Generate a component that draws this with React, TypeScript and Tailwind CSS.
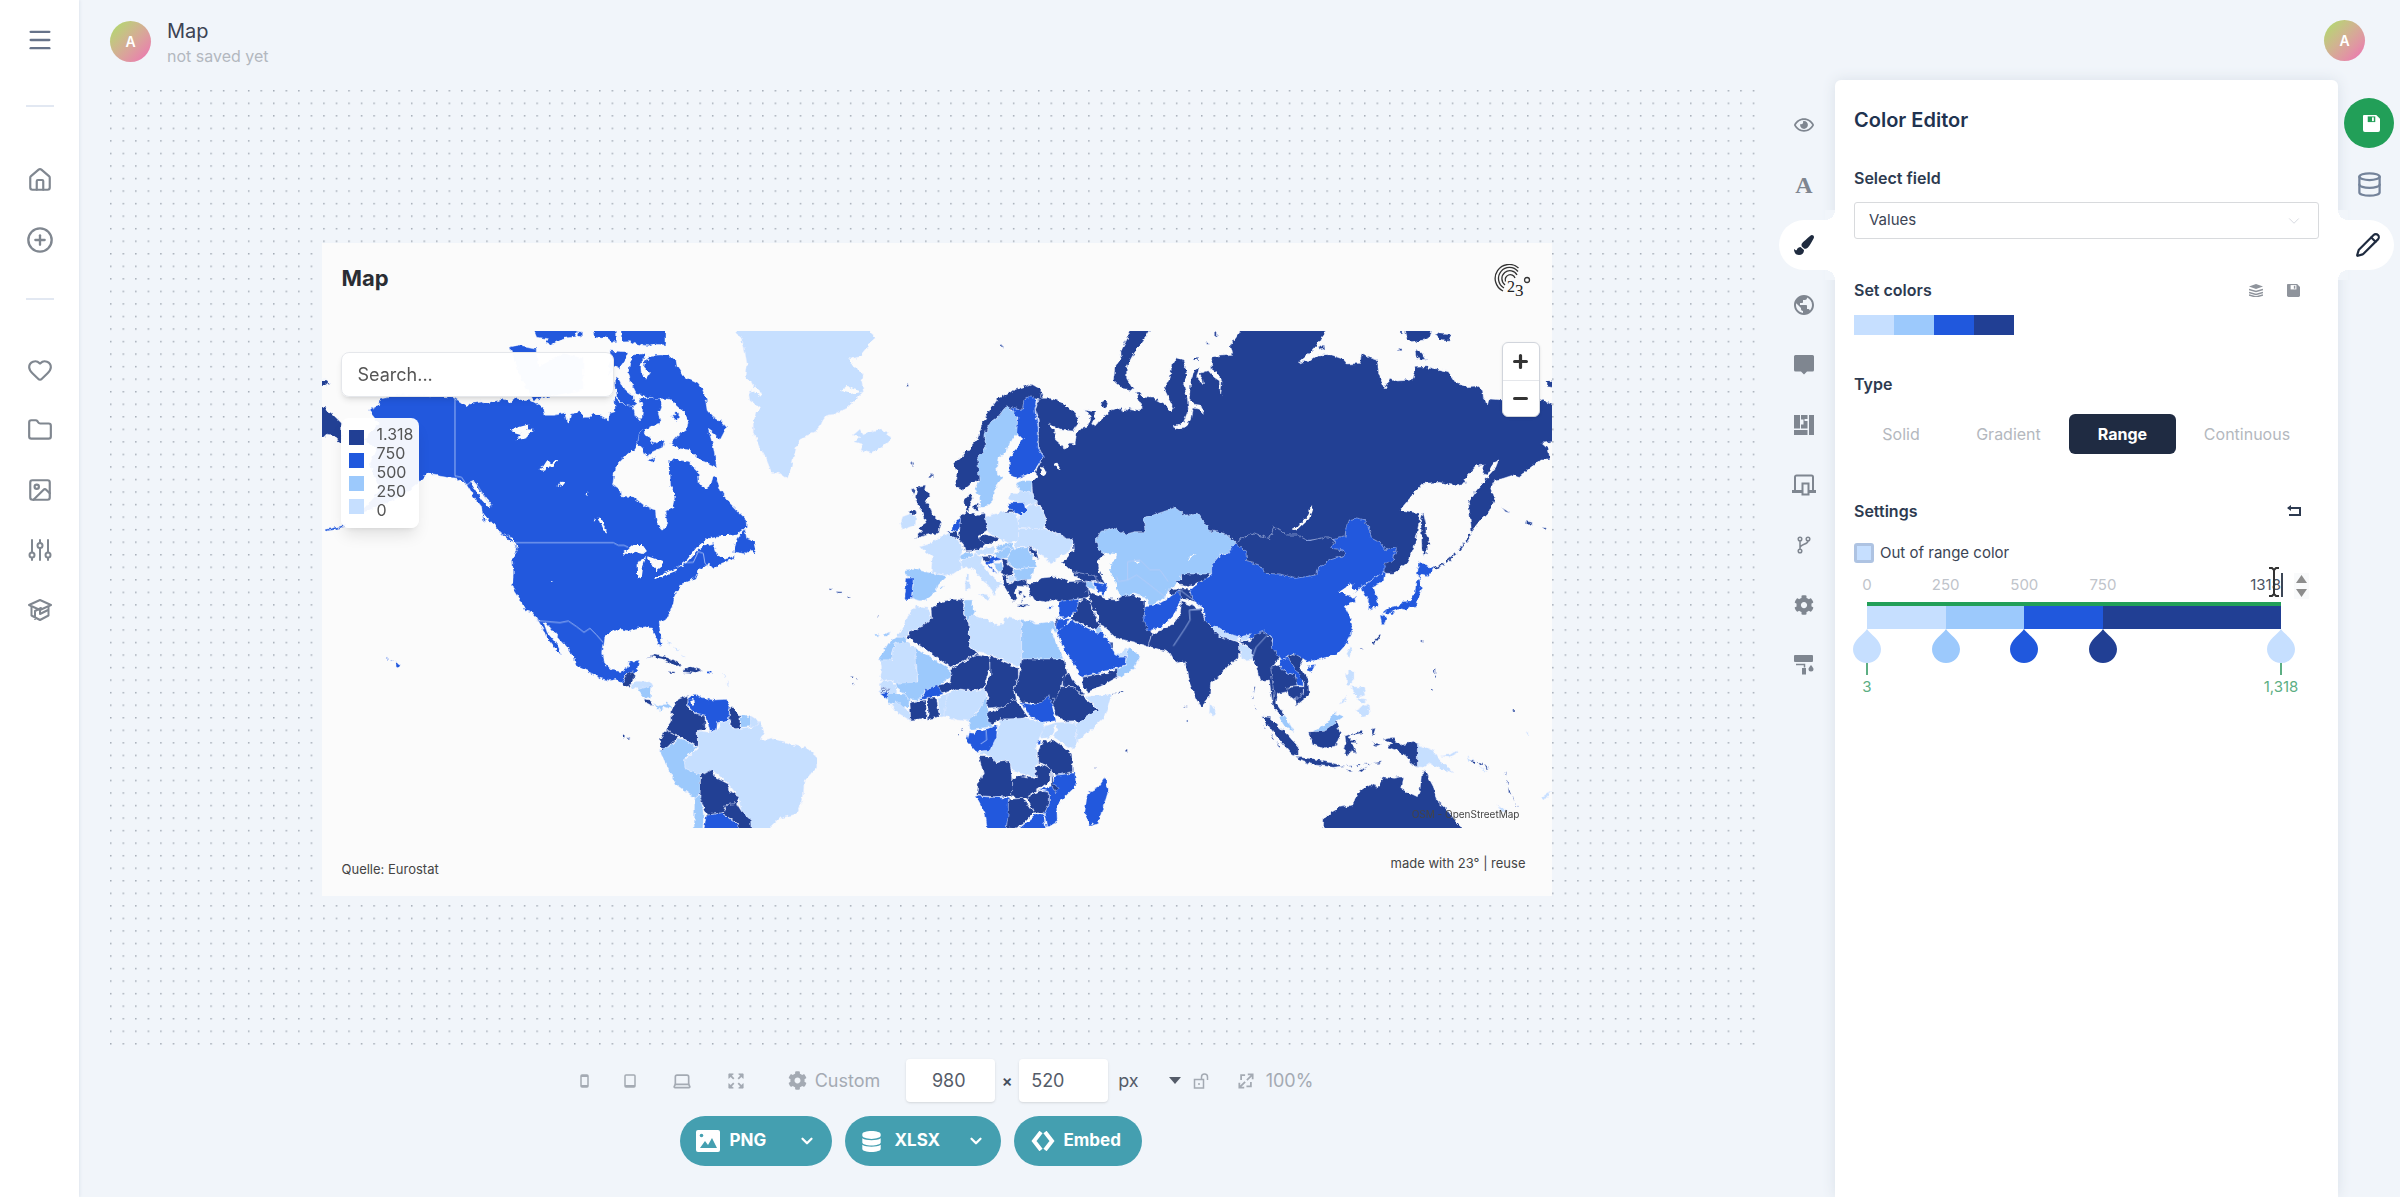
import { ReactNode } from 'react';
import { ChevronDown, Database, Folder, Heart, House, Image, Laptop, Menu, Pencil, CirclePlus } from 'lucide-react';
import { FaCog, FaDatabase, FaPaintBrush, FaRegEye } from 'react-icons/fa';
import { MdPublic } from 'react-icons/md';

const NAVY = '#213f94';
const BLUE = '#2058dd';
const SKY = '#9cc9fc';
const PALE = '#c6dfff';
const SEA = '#fbfbfb';

interface Shape {
  fill: string;
  d: string;
}

interface Region {
  x: number;
  y: number;
  shapes: Shape[];
  lines?: string[];
}

// every region is drawn on its own grid, three units to the pixel
const regions: Region[] = [
  {
    // North America
    x: 300,
    y: 230,
    shapes: [
      { fill: BLUE, d: 'M205 540L235 525 240 505 300 492 370 496 440 500 465 505 482 516 500 530 512 518 545 513 562 518 590 512 612 508 628 518 645 503 672 512 690 510 715 524 732 538 735 556 760 556 795 548 800 570 806 582 812 552 840 545 852 562 868 562 880 552 905 558 925 570 930 550 945 545 944 500 962 515 980 525 1000 530 1005 555 1015 572 1026 560 1028 530 1018 505 1040 503 1078 500 1085 525 1075 550 1082 580 1062 585 1030 600 1012 632 1008 655 985 670 960 695 945 712 938 765 960 780 962 797 1000 800 1040 832 1066 840 1070 880 1090 902 1103 880 1095 845 1118 835 1125 790 1112 770 1108 690 1130 688 1165 695 1195 725 1197 755 1215 778 1232 765 1240 738 1250 748 1262 780 1278 808 1310 840 1338 868 1340 892 1310 912 1265 920 1230 925 1200 945 1215 945 1240 940 1250 965 1275 988 1310 975 1295 990 1265 1000 1240 1016 1225 1000 1195 1022 1185 1045 1145 1062 1125 1095 1120 1120 1105 1160 1078 1175 1078 1180 1082 1215 1087 1245 1080 1250 1068 1225 1055 1195 1035 1190 1010 1195 985 1202 965 1198 940 1200 915 1220 908 1270 915 1300 935 1320 965 1325 980 1315 985 1297 1018 1290 1010 1325 1002 1328 978 1332 968 1362 950 1348 930 1352 900 1345 885 1335 850 1318 828 1308 822 1285 800 1250 780 1228 760 1205 738 1178 732 1180 742 1208 760 1230 775 1250 785 1272 775 1268 757 1245 738 1222 728 1195 710 1164 696 1147 675 1140 655 1099 637 1071 640 1030 637 985 652 962 640 935 600 910 585 885 550 872 545 830 520 798 500 765 470 745 440 742 400 735 385 728 358 757 320 790 270 815 180 852 240 780 222 740 210 700 228 655 195 632 210 605 235 578Z' },
      { fill: BLUE, d: 'M695 285L1000 285 830 305 825 320 792 325 755 346 735 340 745 326 710 322Z M835 308h10v14h-10Z M878 290H950V335H935L920 322 905 325 882 322Z M962 290H1095V345L1060 342 1045 347 1018 344 990 335 965 336Z' },
      { fill: BLUE, d: 'M630 352L660 345 708 355 715 410 790 370 850 385 850 480 700 510 660 440Z' },
      { fill: BLUE, d: 'M930 362L985 366 975 390 958 415 945 408 925 440Z M945 440L958 450 970 475 990 490 1012 520 1000 530 975 525 950 500Z' },
      { fill: BLUE, d: 'M1000 375L1038 370 1035 385 1022 400 1024 430 1038 448 1050 430 1032 410 1035 392 1055 376 1082 375 1110 377 1128 392 1132 412 1150 440 1192 460 1208 480 1220 512 1225 545 1240 562 1262 572 1280 592 1260 630 1242 610 1225 598 1240 650 1250 712 1225 700 1200 690 1170 660 1130 655 1112 640 1135 615 1160 600 1165 570 1150 545 1130 528 1110 508 1060 505 1010 492 992 455 985 425 990 395Z' },
      { fill: BLUE, d: 'M1015 608L1030 600 1045 620 1062 640 1095 630 1088 652 1058 665 1040 680 1030 660 1010 640Z M1045 690L1070 682 1058 697Z M1115 560L1130 545 1140 558 1130 575Z' },
      { fill: BLUE, d: 'M1335 898L1340 925 1362 935 1368 972 1350 962 1340 972 1300 965 1308 940 1322 912Z' },
      { fill: SEA, d: 'M968 970L985 958 1000 945 1030 945 1042 962 1030 972 1005 965 985 972Z M1012 1048L1010 1005 1025 985 1038 982 1030 1005 1025 1045Z M1040 978L1060 985 1088 995 1085 1010 1070 1022 1055 1002Z M1060 1046L1090 1030 1128 1016 1130 1022 1095 1036 1066 1050Z M1128 1016L1160 990 1190 952 1225 924 1235 928 1200 955 1165 995Z M1260 915L1300 915 1305 935 1285 960 1278 985 1255 978 1248 960 1262 940Z' },
      { fill: SEA, d: 'M628 602L655 592 688 583 682 598 704 600 685 612 682 625 650 630 662 612Z M712 720L728 712 742 690 750 700 774 690 760 708 742 712 735 722Z M772 768L785 755 802 757 790 764Z M856 795L865 786 862 802Z M893 862L905 865 912 885 922 908 908 900Z M880 865l6 6 -4 4Z M752 1052l8 4 -4 4Z' },
      { fill: SEA, d: 'M510 755L522 750 540 780 575 825 568 835 545 810Z M550 850L575 880 600 905 640 925 655 955 640 940 600 915 560 885Z' },
      { fill: BLUE, d: 'M75 898L95 895 135 885 135 890 100 900 76 904Z M600 905L625 918 642 938 625 930Z' },
      { fill: NAVY, d: 'M40 510L64 528 95 550 125 580 125 640 108 628 98 615 80 612 64 628 40 625Z M40 450H80L88 458 76 468H40Z' },
    ],
    lines: ['M465 505V738L485 742 500 765 518 752 535 770 560 810 575 830', 'M645 938H940L955 946 972 946 985 952', 'M1150 998L1180 997 1195 965 1210 970 1215 1000 1225 1010', 'M710 1172L780 1178 805 1173 830 1190 852 1207 870 1195 890 1215 910 1238'],
  },
  {
    // Greenland and Iceland
    x: 700,
    y: 300,
    shapes: [
      { fill: PALE, d: 'M100 75L515 75 512 98 528 112 508 128 498 148 480 170 455 175 470 200 490 225 485 245 490 275 470 295 440 325 405 342 380 345 368 362 355 390 325 405 300 415 290 440 282 465 272 510 262 535 240 520 215 517 198 475 178 440 160 400 160 370 168 340 182 325 150 302 145 275 168 270 155 245 138 235 142 195 130 130Z' },
      { fill: SEA, d: 'M420 272L440 258 462 268 488 275 455 282Z M445 175L470 180 490 215 465 205Z M150 255L178 270 185 290 160 275Z' },
      { fill: PALE, d: 'M460 405L480 388 488 405 515 395 545 385 560 398 572 417 545 442 515 460 480 450 488 432 465 425 480 412Z' },
      { fill: NAVY, d: 'M615 260L628 248 625 258Z M902 134h5v8h-5Z M632 484l10 4 -3 12Z M690 530l8 -12 0 12Z M388 866h6v4h-6Z M412 874l14 4 -12 2Z M446 888h5v5h-5Z M534 949h5v3h-5Z' },
      { fill: SKY, d: 'M524 1003L540 1001 530 1008Z M552 1006L572 995 560 1010Z' },
    ],
  },
  {
    // Russia
    x: 860,
    y: 320,
    shapes: [
      { fill: NAVY, d: 'M545 215L548 235 575 235 620 257 650 285 655 310 640 333 600 330 565 308 575 325 590 340 585 358 602 372 612 388 632 372 642 375 646 345 665 325 683 322 692 295 675 268 705 272 704 292 695 312 705 318 722 298 750 275 782 262 790 278 805 265 832 270 850 268 838 240 828 212 850 232 885 235 915 252 932 275 940 262 925 232 912 205 930 175 935 135 950 113 970 120 982 165 970 190 982 235 985 270 970 308 942 320 955 328 975 325 992 295 998 264 1018 268 1030 280 1024 256 1000 252 988 235 992 185 1004 150 1018 140 1010 172 1030 195 1028 175 1018 160 1045 152 1062 172 1078 182 1082 225 1086 185 1072 160 1055 148 1055 112 1085 105 1118 103 1112 75 1130 50 1150 15 1400 15 1392 45 1372 72 1345 102 1315 130 1350 120 1372 105 1410 104 1450 118 1462 132 1500 130 1505 98 1525 112 1552 120 1556 160 1572 205 1590 175 1610 183 1658 180 1668 142 1700 140 1765 155 1788 190 1820 200 1850 198 1868 212 1870 235 1885 258 1890 237 1925 240 2040 238 2095 262 2095 362 2045 370 2065 388 2070 420 2040 420 1975 472 1960 465 1930 475 1905 480 1892 505 1904 540 1888 575 1868 595 1835 637 1830 590 1825 545 1842 520 1872 485 1905 448 1915 422 1902 428 1880 462 1868 458 1874 435 1850 437 1815 475 1820 490 1780 495 1740 487 1690 490 1660 522 1620 570 1650 575 1680 580 1672 640 1660 690 1640 730 1600 760 1575 760 1530 700 1500 640 1465 640 1455 680 1425 700 1300 700 1120 700 1050 660 1015 630 940 610 900 640 855 670 800 670 730 665 722 690 735 702 712 722 720 760 735 792 700 780 640 760 605 725 620 715 640 690 638 660 600 645 555 625 560 600 545 565 520 545 515 490 535 470 525 460 548 415 535 380 535 300 525 270Z' },
      { fill: NAVY, d: 'M818 15L880 15 862 45 835 80 815 112 800 142 800 175 820 210 785 205 760 182 765 142 785 112 782 95 800 60Z M722 250l14 -10 8 12 -14 12Z M1066 36h6v12h-6Z M1040 68h8v5h-8Z M1000 112h14v8h-14Z M420 74h5v6h-5Z' },
      { fill: NAVY, d: 'M1690 575L1698 610 1698 640 1712 672 1700 678 1700 700 1692 712 1686 690 1684 640 1682 600Z M1630 20H1718L1710 52 1690 60 1655 68 1638 50Z M1725 40L1775 45 1770 64 1745 62Z M1665 88L1685 98 1700 120 1680 122 1668 108Z M2060 185L2095 175V205L2062 200Z M1375 80l15 -5 2 12 -14 4Z M1620 36h8v6h-8Z M1618 86h8v6h-8Z' },
      { fill: NAVY, d: 'M1830 640L1815 665 1820 668 1836 642Z M1812 670L1795 690 1799 694 1815 674Z M1788 697L1758 722 1762 726 1792 700Z M1750 728L1722 745 1726 750 1754 731Z M1928 565l10 6 12 8 -14 -4Z M1996 604l22 3 -12 8Z M2046 622l14 2 -4 6Z' },
      { fill: SEA, d: 'M540 440L552 445 560 460 545 468Z M583 430L592 428 602 445 592 450Z M1297 628L1320 613 1345 588 1352 556 1358 562 1348 596 1322 622 1305 630Z' },
      // central and east Asia
      { fill: SKY, d: 'M708 660L722 635 760 625 800 642 825 635 855 635 850 592 880 585 910 575 945 563 975 585 1015 583 1050 632 1095 640 1125 668 1108 700 1080 703 1058 735 1055 765 965 765 958 785 925 810 918 830 890 848 870 860 855 830 820 822 780 835 765 815 755 780 745 735 770 705 735 700 715 690Z' },
      { fill: SEA, d: 'M720 715L742 700 770 702 768 718 748 735 752 760 765 780 770 802 780 830 760 840 735 828 730 805 742 790 720 762 712 740Z M983 722L990 708 1010 702 992 714Z M825 722l15 0 -8 10Z' },
      { fill: NAVY, d: 'M965 762L1050 762 1040 778 1010 790 985 800 960 795 945 782 965 778Z M925 810L945 805 985 808 1002 835 1020 850 965 835 935 832Z' },
      { fill: BLUE, d: 'M1125 668L1425 658 1455 650 1458 625 1465 600 1490 594 1508 598 1525 620 1535 655 1560 668 1575 690 1610 680 1600 720 1575 730 1575 758 1545 772 1505 800 1490 815 1470 828 1478 835 1490 832 1480 845 1455 860 1468 885 1476 910 1475 940 1452 980 1430 1005 1390 1015 1345 1025 1320 1012 1300 1003 1260 1020 1235 985 1238 955 1210 935 1175 955 1135 950 1110 955 1055 920 1035 905 1030 865 995 835 990 810 1005 798 1055 765 1055 735 1080 705 1105 700Z' },
      { fill: SEA, d: 'M1438 815L1458 802 1465 792 1480 790 1478 808 1492 812 1475 828 1450 822Z' },
      { fill: NAVY, d: 'M1128 665L1175 640 1230 655 1242 620 1280 645 1312 645 1345 663 1400 650 1425 660 1415 685 1450 690 1456 705 1410 720 1375 745 1370 765 1305 775 1260 762 1215 760 1200 735 1160 725 1158 695 1130 670Z' },
      { fill: BLUE, d: 'M1505 802L1540 775 1575 757 1570 785 1540 800 1550 828 1556 858 1525 870 1528 842 1512 825Z' },
      { fill: BLUE, d: 'M1680 722L1692 735 1722 745 1702 770 1685 765 1678 772 1668 760Z M1678 772L1685 808 1675 832 1670 858 1650 860 1635 872 1615 868 1588 880 1565 882 1590 862 1622 855 1630 845 1650 842 1665 815 1668 785Z M1560 885L1580 890 1575 908 1565 912Z M1590 875L1605 876 1595 888Z' },
    ],
    lines: ['M803 780V725L840 720 870 750 900 750 925 785', 'M770 770L775 785 803 780 830 765 870 795 895 815 918 832', 'M535 235L525 265 535 300 535 380 550 410'],
  },
  {
    // Europe
    x: 860,
    y: 320,
    shapes: [
      { fill: NAVY, d: 'M280 430L310 405 350 362 365 315 388 272 415 235 450 215 480 203 510 193 545 212 540 240 520 235 500 245 490 268 455 268 440 262 412 295 390 312 380 365 370 410 358 420 358 480 335 490 312 510 290 500 286 480 292 455Z' },
      { fill: SKY, d: 'M440 257L455 270 472 275 475 340 462 350 450 368 440 395 415 412 410 440 412 462 428 470 412 495 400 518 402 540 382 560 362 562 358 530 345 505 357 480 353 412 375 390 375 345 385 312 410 295Z' },
      { fill: BLUE, d: 'M452 262L470 268 490 267 496 237 514 228 528 240 525 275 535 320 535 380 550 412 520 460 475 474 448 466 448 412 472 385 487 355 470 340 474 290Z' },
      { fill: NAVY, d: 'M314 540L332 518 337 535 328 555 330 572 316 570Z M340 555L356 552 352 574 340 570Z' },
      { fill: NAVY, d: 'M172 502L197 498 194 512 212 520 196 540 210 560 218 585 245 608 236 640 205 644 165 655 188 634 176 622 198 608 190 578 176 562 165 535Z M148 572L168 568 170 580 155 584Z M155 510l10 -6 -6 20Z M208 470l8 -12 0 12Z' },
      { fill: PALE, d: 'M128 590L150 582 168 586 166 615 128 628 122 612Z' },
      { fill: NAVY, d: 'M300 592L320 575 345 585 375 580 382 630 352 650 376 672 358 690 315 692 310 672 296 658 300 620Z' },
      { fill: BLUE, d: 'M276 620L288 602 302 598 300 620 292 636 275 630Z' },
      { fill: NAVY, d: 'M258 636L290 634 298 656 280 652Z' },
      { fill: PALE, d: 'M376 590L430 575 470 580 476 620 475 662 448 670 418 655 384 636Z' },
      { fill: NAVY, d: 'M352 655L376 643 418 655 398 672 372 670Z' },
      { fill: SKY, d: 'M468 490L485 482 516 482 515 520 480 512Z' },
      { fill: PALE, d: 'M448 538L452 520 475 522 480 512 518 520 530 550 498 558 470 545Z' },
      { fill: BLUE, d: 'M446 548L495 548 500 570 482 586 462 574 448 566Z' },
      { fill: NAVY, d: 'M430 575L450 567 464 576Z' },
      { fill: PALE, d: 'M500 568L520 550 546 568 560 605 550 628 475 622 476 590 482 586Z' },
      { fill: PALE, d: 'M475 625L552 626 600 645 638 660 635 690 600 710 582 722 575 735 560 715 540 705 525 685 508 682 460 682 476 660Z' },
      { fill: NAVY, d: 'M506 680L526 690 535 712 522 712Z' },
      { fill: SKY, d: 'M440 718L460 685 506 683 520 715 532 740 470 747 448 735Z' },
      { fill: SKY, d: 'M402 700L440 680 460 685 440 714 410 716Z M408 678L455 668 458 680 415 692Z' },
      { fill: SKY, d: 'M458 750L522 742 512 778 466 782Z M298 708L325 694 340 702 310 720Z' },
      { fill: PALE, d: 'M350 692L402 678 402 702 350 702Z' },
      { fill: PALE, d: 'M182 680L215 670 240 650 265 640 300 665 310 690 300 708 304 745 282 760 255 766 214 755 217 712 190 690Z' },
      { fill: PALE, d: 'M302 722L350 702 370 712 362 728 388 760 425 792 410 800 405 828 388 795 355 768 335 742 308 745Z M355 820L390 826 384 842Z M316 785h12v24h-12Z M318 762h8v18h-8Z' },
      { fill: BLUE, d: 'M372 725L400 708 428 718 400 725 385 735 415 762 392 748Z' },
      { fill: SKY, d: 'M398 730L425 730 430 752 415 755Z' },
      { fill: NAVY, d: 'M366 710L392 708 386 722 370 722Z M425 715L442 720 445 735 460 745 455 765 440 768 422 758 430 740Z' },
      { fill: NAVY, d: 'M425 765L440 770 445 790 470 783 500 778 500 800 470 798 462 815 472 835 462 845 445 820 430 795Z M468 855L512 852 490 862Z M475 810l12 6 -6 10Z M490 820l8 10 -8 6Z M482 836l8 6 -8 4Z' },
      { fill: PALE, d: 'M444 770L465 768 464 783 446 786Z' },
      { fill: NAVY, d: 'M502 790L525 788 545 774 585 770 625 785 680 782 685 832 640 840 600 845 575 840 550 848 520 842 505 815Z' },
      { fill: NAVY, d: 'M638 755L700 766 718 782 690 786 655 776Z' },
      { fill: SKY, d: 'M674 785L695 785 706 810 680 800Z' },
      { fill: BLUE, d: 'M698 786L742 794 730 828 705 802Z' },
      { fill: SKY, d: 'M135 753L165 748 215 760 260 768 232 795 226 818 198 840 178 842 155 835 160 790Z M240 802l14 -4 -8 8Z' },
      { fill: BLUE, d: 'M140 775L160 773 154 838 134 836Z' },
    ],
  },
  {
    // Africa and the Middle East
    x: 860,
    y: 540,
    shapes: [
      { fill: NAVY, d: 'M680 150L700 160 740 178 770 180 795 165 825 165 855 185 855 235 875 280 865 320 820 305 775 297 735 262 715 252 716 230 698 200Z' },
      { fill: BLUE, d: 'M855 200L890 195 925 175 960 150 962 190 940 225 905 262 862 272 852 235Z' },
      { fill: NAVY, d: 'M653 188L672 172 688 182 700 210 720 262 700 268 630 236 650 212Z' },
      { fill: BLUE, d: 'M597 184L657 178 650 212 618 235 598 232Z M588 238L630 236 612 262 596 275 586 270Z M562 202L582 197 570 208Z' },
      { fill: NAVY, d: 'M584 235L592 232 590 265Z M750 310h9v12h-9Z M760 458h8v4h-8Z M775 455h14v4h-14Z' },
      { fill: BLUE, d: 'M590 275L612 262 632 240 700 272 725 278 752 312 765 345 798 352 795 375 740 392 665 412 640 370 610 325Z' },
      { fill: SKY, d: 'M706 264L722 264 724 276 710 276Z M806 318L840 350 822 385 785 412 770 408 766 388 796 376 800 345Z' },
      { fill: PALE, d: 'M764 342L785 338 806 318 800 350 780 352Z' },
      { fill: NAVY, d: 'M668 412L740 398 768 388 772 412 730 435 682 457 672 440Z' },
      { fill: PALE, d: 'M165 200L205 205 214 235 190 258 145 275 138 292 110 290 130 262 140 230Z' },
      { fill: NAVY, d: 'M213 205L240 185 280 178 312 180 310 222 326 250 330 320 350 340 272 384 225 348 143 292 148 275 190 258 215 235Z' },
      { fill: SKY, d: 'M314 180L337 180 335 198 345 215 326 248 312 222Z' },
      { fill: PALE, d: 'M332 225L385 240 402 256 432 252 435 232 485 240 485 382 395 345 350 336 330 318 327 250Z' },
      { fill: SKY, d: 'M485 238L530 250 582 245 590 278 572 268 610 357 485 357Z' },
      { fill: SKY, d: 'M55 360L85 310 110 292 143 292 140 308 105 310 100 335 92 360Z' },
      { fill: PALE, d: 'M60 360L95 360 105 310 140 305 168 328 172 428 110 432 90 418 60 422 66 390Z' },
      { fill: SKY, d: 'M166 325L272 388 272 412 232 440 195 452 172 482 145 478 135 462 110 445 108 430 174 426Z' },
      { fill: PALE, d: 'M58 428L90 418 110 440 110 462 60 460Z' },
      { fill: NAVY, d: 'M60 446h28v3h-28Z M62 453h28v3h-28Z' },
      { fill: BLUE, d: 'M60 461L88 458 86 466 74 472Z' },
      { fill: SKY, d: 'M76 472L90 460 135 462 148 480 146 500 128 505 108 482 90 492Z' },
      { fill: PALE, d: 'M92 495L108 482 128 500 148 515 152 542 110 516Z' },
      { fill: NAVY, d: 'M150 487L195 480 200 508 198 535 152 540Z M203 475L230 474 238 530 205 538Z' },
      { fill: PALE, d: 'M234 474L262 462 260 525 240 528Z' },
      { fill: BLUE, d: 'M178 478L200 448 232 433 250 462 195 478Z' },
      { fill: NAVY, d: 'M274 387L350 342 388 350 390 385 370 445 335 452 290 446 245 458 232 436 270 428Z' },
      { fill: PALE, d: 'M262 462L290 448 335 453 372 448 382 475 348 520 320 542 290 540 252 525Z' },
      { fill: SKY, d: 'M382 465L385 525 398 560 330 568 326 538 352 518Z' },
      { fill: NAVY, d: 'M390 345L475 385 475 410 460 450 466 476 430 500 398 506 378 488 388 474 372 448 390 405Z' },
      { fill: NAVY, d: 'M384 518L430 500 466 476 502 528 480 540 420 536 400 552 384 545Z' },
      { fill: NAVY, d: 'M486 357H612L622 400 608 412 604 450 578 490 550 490 530 490 485 486 460 452 477 408Z' },
      { fill: BLUE, d: 'M484 488L520 494 550 485 566 462 580 510 588 542 550 546 510 530Z' },
      { fill: NAVY, d: 'M608 410L625 400 648 430 672 462 665 465 640 440 608 438Z' },
      { fill: NAVY, d: 'M605 440L640 440 670 472 715 508 665 545 620 546 588 525 578 490Z' },
      { fill: PALE, d: 'M678 470L756 463 732 530 690 572 650 605 650 550 715 508Z' },
      { fill: PALE, d: 'M586 548L620 546 650 550 650 605 637 628 582 592 592 565Z M540 592L546 562 586 548 580 590Z' },
      { fill: PALE, d: 'M420 538L500 534 555 548 540 592 528 622 536 668 522 682 530 712 500 706 456 692 450 662 405 665 395 646 352 642 392 622 410 590Z' },
      { fill: BLUE, d: 'M346 572L382 566 412 555 410 590 390 630 348 635 320 602 325 578 345 580Z M528 605L545 600 540 612Z' },
      { fill: NAVY, d: 'M550 600L580 600 635 638 638 695 588 706 570 686 536 665 535 632Z' },
      { fill: SEA, d: 'M553 592L580 588 572 605 560 612Z' },
      { fill: NAVY, d: 'M357 650L395 650 408 668 450 662 455 715 456 770 400 770 350 766 354 735 370 700Z' },
      { fill: NAVY, d: 'M455 720L475 706 530 716 524 680 545 674 572 688 570 722 540 745 500 772 465 776 455 765Z' },
      { fill: BLUE, d: 'M588 706L645 698 648 738 620 765 590 798 592 845 560 864 553 820 568 790 568 755 540 748 575 738Z' },
      { fill: NAVY, d: 'M574 685L582 735 594 745 586 758 576 735Z M500 772L540 752 568 757 568 790 553 820 522 818Z M445 778L490 775 522 818 490 852 465 866 438 864 440 820Z' },
      { fill: BLUE, d: 'M348 768L445 775 445 820 436 885 384 885 376 820Z M455 885L490 855 530 822 550 822 560 885Z' },
      { fill: BLUE, d: 'M735 712L745 750 715 848 688 856 674 820 682 760 715 742Z' },
      { fill: NAVY, d: 'M796 628h6v7h-6Z M294 582h5v4h-5Z M305 568h4v4h-4Z M704 682h5v3h-5Z' },
    ],
    lines: ['M378 570L380 600 362 612'],
  },
  {
    // South and south-east Asia, Australia
    x: 1180,
    y: 560,
    shapes: [
      { fill: NAVY, d: 'M-95 258L-85 222 -25 197 0 165 5 125 62 148 76 185 98 205 150 238 180 250 178 290 150 312 120 345 92 370 88 412 65 440 50 420 25 360 15 302 -12 310 -30 278Z' },
      { fill: NAVY, d: 'M175 240L208 246 225 225 250 213 275 235 278 265 298 292 278 322 282 350 288 395 278 435 268 360 240 362 230 325 218 297 205 262Z' },
      { fill: PALE, d: 'M92 200L110 198 140 218 175 230 172 244 120 230Z M180 230L208 224 210 240 185 242Z M176 247L200 260 218 268 216 298 186 300Z M90 430L106 452 100 466 88 460Z' },
      { fill: NAVY, d: 'M272 322L300 315 315 335 345 345 354 376 325 380 320 395 292 402 290 430 315 465 302 466 276 435 282 400Z' },
      { fill: BLUE, d: 'M298 300L325 292 345 320 372 360 368 378 352 376 345 345 306 332Z M384 320L405 316 395 335 384 332Z' },
      { fill: NAVY, d: 'M322 290L345 282 370 296 358 320 385 362 388 405 350 436 345 416 370 400 372 368 345 325Z M320 382L370 380 370 405 345 420 325 406Z' },
      { fill: SKY, d: 'M293 465L318 470 342 515 314 500Z M395 518L440 490 462 458 490 470 468 487 442 512 405 520Z' },
      { fill: NAVY, d: 'M385 516L430 514 470 485 482 515 465 562 435 566 398 554Z M245 470L268 472 320 522 355 560 355 588 335 582 290 530Z M350 592L400 596 460 610 492 618 460 622 400 614 360 602Z' },
      { fill: NAVY, d: 'M495 528L520 520 548 512 545 520 510 526 504 538 528 538 532 548 516 548 528 582 514 570 505 586 492 580 498 550Z M576 505l10 -4 -4 22 -6 6Z M575 548L605 552 590 558Z' },
      { fill: NAVY, d: 'M498 616l15 -2 0 6Z M520 616l22 -2 -2 5Z M552 612l22 -1 -4 5Z M580 610l22 -5 -4 6Z M535 632L562 620 545 636Z M500 628l18 4 -8 4Z M250 495l10 8 -3 4Z M272 522l10 14 -5 2Z M290 545l10 14 -5 2Z' },
      { fill: NAVY, d: 'M610 540L640 532 648 546 668 555 700 544 714 552 714 622 695 612 678 588 650 570 625 562 632 550Z' },
      { fill: PALE, d: 'M712 552L760 572 778 602 822 638 778 625 748 608 730 622 712 620Z M782 588L810 584 832 570 834 578 808 592Z' },
      { fill: PALE, d: 'M500 340L510 330 522 334 522 355 512 376 500 372Z M512 380L550 382 558 405 535 412 520 398Z M530 415L560 418 545 430Z M540 445L565 432 568 462 550 468 530 450Z M478 432L500 408 490 428Z M500 282L512 260 518 265 508 290Z' },
      { fill: PALE, d: 'M860 590L882 600 865 602Z M900 620L925 635 912 632Z M1086 710L1112 696 1095 718Z M950 738L985 752 965 752Z M1038 515l10 6 -4 4Z' },
      { fill: NAVY, d: 'M872 598l14 6 -6 6Z M892 602l16 12 -8 2Z M912 610l16 16 -8 0Z M974 636l8 12 -5 -2Z M978 660l6 4 -2 14Z M984 682l10 18 -8 -2Z M1000 712l6 10 -4 0Z M1008 732l5 8 -4 0Z M762 328h4v10h-4Z M764 345h4v8h-4Z M752 384h6v5h-6Z M722 240h5v4h-5Z M998 448h4v6h-4Z' },
      { fill: NAVY, d: 'M576 248L600 222 602 226 582 252Z M540 265h10v3h-10Z M14 440h5v3h-5Z M20 483h5v3h-5Z M222 380l4 0 -4 20Z M218 405l3 12 -4 0Z M226 435l4 15 -4 -4Z' },
      { fill: NAVY, d: 'M420 825L430 800 432 770 480 742 518 735 532 698 570 672 595 682 608 650 640 655 668 650 662 686 712 710 720 690 725 640 735 632 760 680 770 722 802 750 822 780 842 800 850 825Z' },
    ],
    lines: ['M35 150L65 145M-20 258L15 205 30 180 28 150 62 148', 'M215 298L228 262 262 225', 'M0 90L40 120'],
  },
  {
    // Latin America
    x: 560,
    y: 540,
    shapes: [
      { fill: NAVY, d: 'M186 430L202 400 224 396 222 418 205 443Z M248 476L270 480 278 498 262 490Z' },
      { fill: PALE, d: 'M210 440L228 424 270 426 276 438 240 448Z' },
      { fill: SKY, d: 'M233 450L275 436 272 472 252 474Z M280 490L300 500 320 488 335 500 330 506 315 500 300 512Z' },
      { fill: NAVY, d: 'M258 355L290 342 330 355 368 376 345 378 310 358 280 350Z M368 395L385 378 428 390 402 400Z M322 394L346 396 335 402Z M188 585l10 3 -4 8Z M203 592l8 5 -5 3Z' },
      { fill: BLUE, d: 'M438 394L456 394 454 401 438 400Z' },
      { fill: PALE, d: 'M322 300L335 310 328 316Z M340 318L360 334 352 336Z M490 400l8 8 -4 6Z M502 425l4 12 -4 0Z M364 345l12 8 -8 0Z' },
      { fill: NAVY, d: 'M335 510L355 478 386 466 382 505 402 520 435 526 436 568 412 572 412 620 375 598 318 570 335 545Z' },
      { fill: NAVY, d: 'M300 600L318 570 356 590 322 625 308 634Z' },
      { fill: BLUE, d: 'M384 478L405 462 425 472 460 480 500 478 510 500 505 540 472 548 470 572 450 576 438 526 402 518 385 500Z' },
      { fill: SEA, d: 'M390 480L400 476 402 492 394 494Z' },
      { fill: NAVY, d: 'M512 498L540 525 540 568 524 570 506 536Z' },
      { fill: SKY, d: 'M541 526L572 530 572 560 542 562Z' },
      { fill: PALE, d: 'M573 528L600 545 582 562 572 560Z' },
      { fill: PALE, d: 'M414 573L450 577 475 568 480 548 505 540 522 570 575 564 600 545 612 575 600 602 636 594 700 615 740 625 770 648 770 680 732 725 730 770 708 822 660 835 630 864 630 885 570 885 545 820 535 770 500 725 456 690 420 705 375 685 372 660 412 626Z' },
      { fill: SKY, d: 'M298 632L322 625 356 594 375 600 410 622 372 658 375 685 420 705 422 760 406 776 350 735 325 685Z M404 775L422 762 430 822 428 885 402 885Z' },
      { fill: NAVY, d: 'M422 706L456 688 465 712 505 732 510 755 537 768 530 792 496 795 488 818 440 826 420 770Z' },
      { fill: BLUE, d: 'M430 885L438 826 488 818 540 858 538 885Z' },
      { fill: NAVY, d: 'M490 818L498 794 530 790 545 815 572 840 574 885 540 885 535 852Z' },
      { fill: NAVY, d: 'M872 408l8 4 -6 4Z M886 418l8 -4 -2 8Z M876 432l8 -4 -2 8Z M808 146h6v4h-6Z M835 155h14v4h-14Z' },
      // Hawaii
      { fill: BLUE, d: 'M-522 354l6 3 -4 3Z M-505 360l8 4 -6 2Z M-492 368L-482 374 -486 384 -492 380Z' },
    ],
  },
];

function WorldMap() {
  return (
    <svg viewBox="322 331 1230 497" className="block w-full" aria-label="World map">
      <defs>
        <filter id="coast" filterUnits="userSpaceOnUse" x="300" y="310" width="1280" height="540">
          <feTurbulence type="fractalNoise" baseFrequency="0.22" numOctaves="2" seed="4" />
          <feDisplacementMap in="SourceGraphic" scale="5" xChannelSelector="R" yChannelSelector="G" />
        </filter>
      </defs>
      <g filter="url(#coast)">
        {regions.map((region, i) => (
          <g key={i} transform={`translate(${region.x} ${region.y}) scale(0.33333)`} strokeLinejoin="round">
            {region.shapes.map((shape, j) => (
              <path key={j} d={shape.d} fill={shape.fill} stroke={shape.fill === SEA ? 'none' : '#e4ecff'} strokeWidth="2" strokeOpacity="0.7" />
            ))}
          </g>
        ))}
      </g>
      {regions.map((region, i) => (
        <g key={i} transform={`translate(${region.x} ${region.y}) scale(0.33333)`} fill="none" stroke="#b9cdf8" strokeWidth="3" strokeOpacity="0.8">
          {region.lines?.map((d) => <path key={d} d={d} />)}
        </g>
      ))}
    </svg>
  );
}

function SaveIcon({ className, hole }: { className: string; hole: string }) {
  return (
    <svg viewBox="0 0 18 18" className={className}>
      <path d="M1 0h13l4 4v12a2 2 0 0 1-2 2H2a2 2 0 0 1-2-2V1a1 1 0 0 1 1-1z" fill="currentColor" />
      <path d="M5 1.500h8v6H5z" fill={hole} />
      <path d="M9.500 2.500h2v4h-2z" fill="currentColor" />
    </svg>
  );
}

function SlidersIcon() {
  return (
    <svg viewBox="0 0 24 24" className="size-6" fill="none" stroke="currentColor" strokeWidth="2" strokeLinecap="round">
      <path d="M4 2v12M4 20v2M12 2v3M12 10v12M20 2v12M20 20v2" />
      <circle cx="4" cy="17" r="2.500" />
      <circle cx="12" cy="7.500" r="2.500" />
      <circle cx="20" cy="17" r="2.500" />
    </svg>
  );
}

function AcademyIcon() {
  return (
    <svg viewBox="0 0 24 24" className="size-6" fill="none" stroke="currentColor" strokeWidth="2" strokeLinejoin="round" strokeLinecap="round">
      <path d="M12 2l11 5-11 5L1 7z" />
      <path d="M3.500 9v8.500L12 22l8.500-4.500V9M7 21v-8l6-3M12 12v4l8-4" />
    </svg>
  );
}

function CommentIcon() {
  return (
    <svg viewBox="0 0 20 20" className="size-5" fill="currentColor">
      <path d="M1.500 0h17A1.500 1.500 0 0 1 20 1.500V15a1.500 1.500 0 0 1-1.500 1.500h-5.500L10 19.500 7 16.500H1.500A1.500 1.500 0 0 1 0 15V1.500A1.500 1.500 0 0 1 1.500 0z" />
    </svg>
  );
}

function LayoutIcon() {
  return (
    <svg viewBox="0 0 20 20" className="size-5" fill="currentColor">
      <path d="M0 0h6v13.500H0zM7 0h6.500v4H10.500V6H13.500V13.500H7V9.500H9.500V4.500H7zM0 15h13.500v5H0zM15 0h5v20h-5z" />
    </svg>
  );
}

function DevicesIcon() {
  return (
    <svg viewBox="0 0 24 22" className="h-[22px] w-6" fill="none" stroke="currentColor" strokeWidth="2">
      <path d="M3 16V3a1.500 1.500 0 0 1 1.500-1.500h15A1.500 1.500 0 0 1 21 3v13" />
      <path d="M0 17.500h10M17 17.500h7" strokeWidth="3" />
      <path d="M10.500 20.500V9.500h6v11z" />
    </svg>
  );
}

function BranchIcon() {
  return (
    <svg viewBox="0 0 14 18" className="h-[18px] w-[14px]" fill="none" stroke="currentColor" strokeWidth="1.500">
      <circle cx="3" cy="3" r="1.800" />
      <circle cx="11" cy="3" r="1.800" />
      <circle cx="3" cy="15" r="1.800" />
      <path d="M3 5v8M11 5c0 4-8 2.500-8 7" />
    </svg>
  );
}

function RollerIcon() {
  return (
    <svg viewBox="0 0 20 20" className="size-5" fill="currentColor">
      <path d="M1 0h17a1 1 0 0 1 1 1v5a1 1 0 0 1-1 1H1a1 1 0 0 1-1-1V1a1 1 0 0 1 1-1z" />
      <path d="M2 9.500h8.500v3" fill="none" stroke="currentColor" strokeWidth="1.500" />
      <path d="M8 13h4v6.500H8zM17 10c1.500 2 2.500 3 2.500 4a2.500 2.500 0 0 1-5 0c0-1 1-2 2.500-4z" />
    </svg>
  );
}

function PhoneIcon() {
  return (
    <svg viewBox="0 0 9 14" className="h-[14px] w-[9px]" fill="none" stroke="currentColor" strokeWidth="1.500">
      <rect x="1" y="1" width="7" height="12" rx="1" />
      <path d="M1 2h7M1 12h7" strokeWidth="2" />
    </svg>
  );
}

function TabletIcon() {
  return (
    <svg viewBox="0 0 12 14" className="h-[14px] w-3" fill="none" stroke="currentColor" strokeWidth="1.500">
      <rect x="1" y="1" width="10" height="12" rx="1" />
      <path d="M1 12h10" strokeWidth="2" />
    </svg>
  );
}

function ExpandIcon() {
  return (
    <svg viewBox="0 0 18 18" className="size-4" fill="currentColor" stroke="currentColor">
      <path d="M1 1h5L1 6zM17 1v5l-5-5zM1 17v-5l5 5zM17 17h-5l5-5z" />
      <path d="M2 2l4.500 4.500M16 2l-4.500 4.500M2 16l4.500-4.500M16 16l-4.500-4.500" strokeWidth="2" />
    </svg>
  );
}

function PopOutIcon() {
  return (
    <svg viewBox="0 0 18 18" className="size-4" fill="none" stroke="currentColor" strokeWidth="2">
      <path d="M8 2.500H3.500V8M14.500 10v5H9.500" />
      <path d="M10 8l6-6M11 1.500h5.500V7M8 10l-6 6M7 16.500H1.500V11" />
    </svg>
  );
}

function UnlockIcon() {
  return (
    <svg viewBox="0 0 16 16" className="size-4" fill="none" stroke="currentColor" strokeWidth="1.500">
      <path d="M1.500 6.500h9v8.500h-9zM8.500 6.500V4a3 3 0 0 1 6 0v3M6 10v2" />
    </svg>
  );
}

function LogoIcon() {
  return (
    <svg viewBox="0 0 38 36" className="h-9 w-[38px]" fill="none" stroke="#333" strokeWidth="1.300">
      <path d="M10 27A14 14 0 1 1 25.500 4" />
      <path d="M11 24A11 11 0 1 1 25 7.500" />
      <path d="M12 21A8 8 0 1 1 24 11" />
      <path d="M12.500 17.500A5 5 0 1 1 22 14" />
      <circle cx="34" cy="16" r="2.500" />
      <text x="14" y="28" fontSize="16" fontFamily="Liberation Serif, serif" fill="#222" stroke="none">2</text>
      <text x="22" y="32" fontSize="17" fontFamily="Liberation Serif, serif" fill="#222" stroke="none">3</text>
    </svg>
  );
}

function Avatar() {
  return (
    <div className="flex size-[41px] items-center justify-center rounded-full bg-linear-to-br from-[#a8e063] to-[#ee6cb4] text-sm font-semibold text-white">
      A
    </div>
  );
}

function SideButton({ label, children }: { label: string; children: ReactNode }) {
  return (
    <button aria-label={label} className="flex h-[60px] w-full items-center justify-center">
      {children}
    </button>
  );
}

function Sidebar() {
  return (
    <nav className="flex w-[79px] shrink-0 flex-col items-center bg-white pt-[10px] text-[#808790] shadow-[1px_0_3px_#dfe6ee]">
      <SideButton label="Menu"><Menu className="size-7 text-[#66738a]" /></SideButton>
      <hr className="mt-[35px] w-7 border-t-2 border-[#e2e8f2]" />
      <div className="mt-[43px] w-full">
        <SideButton label="Home"><House className="size-[26px]" /></SideButton>
        <SideButton label="Create"><CirclePlus className="size-7" /></SideButton>
      </div>
      <hr className="mt-7 w-7 border-t-2 border-[#e2e8f2]" />
      <div className="mt-10 w-full">
        <SideButton label="Favorites"><Heart className="size-[26px]" /></SideButton>
        <SideButton label="Folders"><Folder className="size-[26px]" /></SideButton>
        <SideButton label="Images"><Image className="size-[26px]" /></SideButton>
        <SideButton label="Preferences"><SlidersIcon /></SideButton>
        <SideButton label="Academy"><AcademyIcon /></SideButton>
      </div>
    </nav>
  );
}

const legend = [NAVY, BLUE, SKY, PALE];
const legendLabels = ['1.318', '750', '500', '250', '0'];

function MapCard() {
  return (
    <article className="relative flex aspect-[1230/653] w-full max-w-[1230px] flex-col bg-[#fbfbfb] text-[#333]">
      <header className="flex h-[88px] items-start justify-between pt-[21px] pr-[21px] pl-5">
        <h2 className="text-[22px] leading-7 font-bold text-[#2a2d33]">Map</h2>
        <LogoIcon />
      </header>
      <div className="relative">
        <WorldMap />
        <input
          aria-label="Search"
          placeholder="Search..."
          className="absolute top-[21px] left-[19px] h-[45px] w-[273px] rounded-lg border border-gray-200 bg-white/98 px-4 text-lg shadow-md placeholder:text-[#555]"
        />
        <div className="absolute top-[87px] left-[19px] flex h-[110px] w-[78px] rounded-lg bg-white/94 pl-2 shadow-lg">
          <div className="flex flex-col gap-[8px] pt-[12px]">
            {legend.map((color) => (
              <span key={color} className="size-[15px]" style={{ backgroundColor: color }} />
            ))}
          </div>
          <ul className="pt-[7px] pl-[13px] text-base leading-[19px] text-[#555]">
            {legendLabels.map((label) => <li key={label}>{label}</li>)}
          </ul>
        </div>
        <div className="absolute top-[11px] right-3 flex w-[38px] flex-col overflow-hidden rounded-md border border-gray-300 bg-white text-[#333] shadow-sm">
          <button aria-label="Zoom in" className="flex h-[38px] items-center justify-center border-b border-gray-200">
            <svg viewBox="0 0 14 14" className="size-[15px]" stroke="currentColor" strokeWidth="3" strokeLinecap="round"><path d="M7 1.500v11M1.500 7h11" /></svg>
          </button>
          <button aria-label="Zoom out" className="flex h-[35px] items-center justify-center">
            <svg viewBox="0 0 14 14" className="size-[15px]" stroke="currentColor" strokeWidth="3" strokeLinecap="round"><path d="M1.500 7h11" /></svg>
          </button>
        </div>
        <span className="absolute right-8 bottom-[6px] text-[10px] leading-4 text-[#444]">OSM - OpenStreetMap</span>
      </div>
      <footer className="flex flex-1 justify-between px-5 text-[13px] leading-4 text-[#444]">
        <span className="pt-[33px]">Quelle: Eurostat</span>
        <span className="pt-[27px] pr-[6px]">made with 23° | <a href="#reuse">reuse</a></span>
      </footer>
    </article>
  );
}

function DotGrid() {
  return (
    <svg className="absolute inset-0 size-full" aria-hidden="true">
      <defs>
        <pattern id="dots" width="12.54" height="12.54" patternUnits="userSpaceOnUse">
          <rect x="0" y="0" width="1.500" height="1.500" fill="#a3abb5" />
        </pattern>
      </defs>
      <rect width="100%" height="100%" fill="url(#dots)" />
    </svg>
  );
}

function SizeBar() {
  return (
    <div className="flex h-[43px] items-center justify-center pl-5 text-lg text-[#a4aab3]">
      <div className="flex w-[164px] items-center justify-between">
        <button aria-label="Phone"><PhoneIcon /></button>
        <button aria-label="Tablet"><TabletIcon /></button>
        <button aria-label="Laptop"><Laptop className="size-5" /></button>
        <button aria-label="Full width"><ExpandIcon /></button>
      </div>
      <button className="ml-11 flex items-center gap-2"><FaCog className="size-[19px]" />Custom</button>
      <input aria-label="Width" defaultValue="980" className="ml-[26px] h-[43px] w-[89px] rounded-sm bg-white pr-1 text-center text-[#555c69] shadow-sm" />
      <span className="w-6 text-center text-base font-semibold text-[#444c5b]">×</span>
      <input aria-label="Height" defaultValue="520" className="h-[43px] w-[89px] rounded-sm bg-white px-3 text-[#555c69] shadow-sm" />
      <button className="ml-[10px] flex items-center text-[#555c69]">
        px
        <svg viewBox="0 0 12 7" className="ml-[30px] h-[7px] w-3" fill="currentColor"><path d="M0 0h12L6 7z" /></svg>
      </button>
      <button aria-label="Unlock ratio" className="ml-3"><UnlockIcon /></button>
      <button className="ml-[29px] flex items-center gap-3"><PopOutIcon />100%</button>
    </div>
  );
}

function ExportBar() {
  const style = 'flex h-[50px] items-center rounded-full bg-[#449fb0] px-4 text-[17px] font-bold text-white';
  return (
    <div className="mt-[14px] flex justify-center gap-[13px] pr-[52px]">
      <button className={`${style} w-[152px]`}>
        <svg viewBox="0 0 24 22" className="mr-[10px] h-[22px] w-6">
          <rect width="24" height="22" rx="2" fill="#fff" />
          <path d="M4 18l5-7 3 4 4-7 5 10z" fill="#449fb0" />
          <circle cx="5.500" cy="5.500" r="1.800" fill="#449fb0" />
        </svg>
        PNG
        <ChevronDown strokeWidth={3} className="ml-auto size-[18px]" />
      </button>
      <button className={`${style} w-[156px]`}>
        <FaDatabase className="mr-[13px] size-[21px]" />
        XLSX
        <ChevronDown strokeWidth={3} className="ml-auto size-[18px]" />
      </button>
      <button className={`${style} w-[128px]`}>
        <svg viewBox="0 0 26 20" className="mr-2 h-5 w-[26px]" fill="none" stroke="#fff" strokeWidth="4"><path d="M11 1L4 10l7 9M15 1l7 9-7 9" /></svg>
        Embed
      </button>
    </div>
  );
}

function ActiveTab({ side, label, children }: { side: 'left' | 'right'; label: string; children: ReactNode }) {
  const left = side === 'left';
  return (
    <button aria-label={label} className={`relative z-10 flex h-[50px] w-14 items-center justify-center bg-white text-[#1f2b3f] ${left ? 'self-end rounded-l-full pr-[6px]' : 'self-start rounded-r-full pl-1'}`}>
      {children}
      <span className={`absolute -top-[10px] size-[10px] ${left ? 'right-0 bg-[radial-gradient(circle_at_0_0,#f1f5fa_10px,#fff_10px)]' : 'left-0 bg-[radial-gradient(circle_at_100%_0,#f1f5fa_10px,#fff_10px)]'}`} />
      <span className={`absolute -bottom-[10px] size-[10px] ${left ? 'right-0 bg-[radial-gradient(circle_at_0_100%,#f1f5fa_10px,#fff_10px)]' : 'left-0 bg-[radial-gradient(circle_at_100%_100%,#f1f5fa_10px,#fff_10px)]'}`} />
    </button>
  );
}

function ToolButton({ label, children }: { label: string; children: ReactNode }) {
  return (
    <button aria-label={label} className="flex h-[60px] w-[62px] items-center justify-center self-end text-[#7f8690]">
      {children}
    </button>
  );
}

function ToolStrip() {
  return (
    <nav className="flex w-[72px] shrink-0 flex-col pt-[95px]">
      <ToolButton label="Preview"><FaRegEye className="size-5" /></ToolButton>
      <ToolButton label="Text"><span className="font-['Liberation_Serif',serif] text-2xl font-bold">A</span></ToolButton>
      <div className="flex h-[60px] flex-col justify-center">
        <ActiveTab side="left" label="Colors"><FaPaintBrush className="size-5" /></ActiveTab>
      </div>
      <ToolButton label="Map"><MdPublic className="size-6" /></ToolButton>
      <ToolButton label="Tooltip"><CommentIcon /></ToolButton>
      <ToolButton label="Layout"><LayoutIcon /></ToolButton>
      <ToolButton label="Devices"><DevicesIcon /></ToolButton>
      <ToolButton label="Branches"><BranchIcon /></ToolButton>
      <ToolButton label="Settings"><FaCog className="size-5" /></ToolButton>
      <ToolButton label="Theme"><RollerIcon /></ToolButton>
    </nav>
  );
}

const stops = [
  { value: 0, left: '0%', width: '19%', color: PALE },
  { value: 250, left: '19%', width: '19%', color: SKY },
  { value: 500, left: '38%', width: '19%', color: BLUE },
  { value: 750, left: '57%', width: '43%', color: NAVY },
];

function Drop({ color, left }: { color: string; left: string }) {
  return (
    <button aria-label="Range stop" className="absolute top-[27px] -ml-[14px]" style={{ left }}>
      <svg viewBox="0 0 28 34" className="block h-[34px] w-7">
        <path d="M14 0C17 5 28 11 28 20a14 14 0 0 1-28 0C0 11 11 5 14 0z" fill={color} />
      </svg>
    </button>
  );
}

function RangeSlider() {
  return (
    <div className="mr-[38px] ml-[13px]">
      <div className="relative h-[33px]">
        {stops.map((stop) => (
          <input
            key={stop.value}
            aria-label={`Stop ${stop.value}`}
            defaultValue={stop.value}
            className="absolute top-1 -ml-5 w-10 text-center text-[15px] leading-6 text-[#bfc4cb] outline-none"
            style={{ left: stop.left }}
          />
        ))}
        <input
          aria-label="Maximum"
          defaultValue="1318"
          className="absolute top-1 -right-[2px] w-12 border-r-2 border-[#3c4656] text-right text-[15px] leading-6 text-[#4b5463] outline-none"
        />
        <div className="absolute top-1 -right-7 flex flex-col gap-[6px] bg-gray-50 p-[2px] text-[#8d8d8d]">
          <button aria-label="Increase"><svg viewBox="0 0 11 8" className="block h-2 w-[11px]" fill="currentColor"><path d="M5.500 0L11 8H0z" /></svg></button>
          <button aria-label="Decrease"><svg viewBox="0 0 11 8" className="block h-2 w-[11px]" fill="currentColor"><path d="M5.500 8L11 0H0z" /></svg></button>
        </div>
        <svg viewBox="0 0 10 30" className="absolute -top-[2px] right-[2px] h-[30px] w-[10px]" fill="none" stroke="#333" strokeWidth="2">
          <path d="M0 1h3l2 2 2-2h3M5 3v24M0 29h3l2-2 2 2h3" />
        </svg>
      </div>
      <div className="relative h-[27px]">
        <div className="h-1 bg-[#229f58]" />
        <div className="flex h-[23px]">
          {stops.map((stop) => (
            <span key={stop.value} style={{ width: stop.width, backgroundColor: stop.color }} />
          ))}
        </div>
        {stops.map((stop) => <Drop key={stop.value} color={stop.color} left={stop.left} />)}
        <Drop color={PALE} left="100%" />
      </div>
      <div className="mt-[34px] flex justify-between text-[15px] leading-6 text-[#5cae83]">
        <span className="-ml-5 flex w-10 flex-col items-center"><i className="h-3 w-[2px] bg-[#5cae83]" />3</span>
        <span className="-mr-5 flex w-10 flex-col items-center"><i className="h-3 w-[2px] bg-[#5cae83]" />1,318</span>
      </div>
    </div>
  );
}

function ColorEditor() {
  const heading = 'text-base leading-6 font-semibold text-[#2d3a50]';
  return (
    <section className="mt-20 flex-1 rounded-t-md bg-white px-[19px] pt-[26px] text-[#3b4454] shadow-[0_0_14px_#d9e0e9]">
      <h1 className="text-xl leading-7 font-semibold text-[#1f3350]">Color Editor</h1>

      <label htmlFor="field" className={`mt-8 block ${heading}`}>Select field</label>
      <div className="relative mt-3">
        <select id="field" className="h-[37px] w-full appearance-none rounded-[3px] border border-[#d8dadd] px-[14px] text-[15px]">
          <option>Values</option>
        </select>
        <ChevronDown strokeWidth={1} className="pointer-events-none absolute top-[10px] right-4 size-[18px] text-[#c9ced6]" />
      </div>

      <div className="mt-[39px] flex items-center justify-between pr-[19px]">
        <h2 className={heading}>Set colors</h2>
        <div className="flex items-center gap-6 text-[#8f949c]">
          <button aria-label="Palettes">
            <svg viewBox="0 0 14 13" className="block h-[13px] w-[14px]" fill="none" stroke="currentColor" strokeWidth="1.500">
              <path d="M7 0l7 2.500L7 5 0 2.500z" fill="currentColor" stroke="none" />
              <path d="M0 5.500l7 2 7-2M0 8.500l7 2 7-2M0 11l7 2 7-2" />
            </svg>
          </button>
          <button aria-label="Save palette"><SaveIcon className="block size-[13px]" hole="#fff" /></button>
        </div>
      </div>
      <div className="mt-[13px] flex">
        {[PALE, SKY, BLUE, NAVY].map((color) => (
          <span key={color} className="h-5 w-10" style={{ backgroundColor: color }} />
        ))}
      </div>

      <h2 className={`mt-[37px] ${heading}`}>Type</h2>
      <div className="mt-[18px] flex h-10 text-base text-[#b4b8be]">
        <button className="w-[94px]">Solid</button>
        <button className="w-[121px]">Gradient</button>
        <button className="w-[107px] rounded-md bg-[#1f2b42] font-bold text-white">Range</button>
        <button className="w-[142px]">Continuous</button>
      </div>

      <div className="mt-[45px] flex items-center justify-between pr-[18px]">
        <h2 className={heading}>Settings</h2>
        <button aria-label="Reset" className="text-[#2d3a50]">
          <svg viewBox="0 0 14 12" className="block h-3 w-[14px]" fill="none" stroke="currentColor" strokeWidth="2">
            <path d="M1 3h12v7H2" />
            <path d="M4 0L0 3l4 3z" fill="currentColor" stroke="none" />
          </svg>
        </button>
      </div>
      <button className="mt-[18px] flex items-center gap-[6px] text-[15px] leading-6">
        <span className="size-5 rounded-[3px] border-3 border-[#aec3e2] bg-[#c6dfff]" />
        Out of range color
      </button>
      <div className="mt-1">
        <RangeSlider />
      </div>
    </section>
  );
}

export default function App() {
  return (
    <div className="flex min-h-screen bg-[#f1f5fa] font-['Inter',sans-serif]">
      <Sidebar />
      <div className="flex min-w-0 flex-1 flex-col pl-[31px]">
        <header className="flex h-[90px] items-start gap-4 pt-[21px]">
          <Avatar />
          <div className="-mt-[3px]">
            <h1 className="text-xl leading-[26px] text-[#3c4353]">Map</h1>
            <p className="text-base leading-6 text-[#b3b8bf]">not saved yet</p>
          </div>
        </header>
        <main className="relative flex flex-1 items-center justify-center">
          <DotGrid />
          <MapCard />
        </main>
        <footer className="h-[148px] shrink-0 pt-[10px]">
          <SizeBar />
          <ExportBar />
        </footer>
      </div>
      <ToolStrip />
      <div className="flex w-[503px] shrink-0 flex-col">
        <ColorEditor />
      </div>
      <aside className="flex w-[62px] shrink-0 flex-col pt-5">
        <div className="-ml-[14px]"><Avatar /></div>
        <button aria-label="Save" className="mt-[37px] ml-[6px] flex size-[50px] items-center justify-center rounded-full bg-[#229f58] pl-1 text-white">
          <SaveIcon className="size-[17px]" hole="#229f58" />
        </button>
        <button aria-label="Data" className="flex h-[72px] w-[62px] items-center justify-center text-[#74839a]">
          <Database className="size-[27px]" />
        </button>
        <ActiveTab side="right" label="Edit"><Pencil className="size-[26px]" /></ActiveTab>
      </aside>
    </div>
  );
}
